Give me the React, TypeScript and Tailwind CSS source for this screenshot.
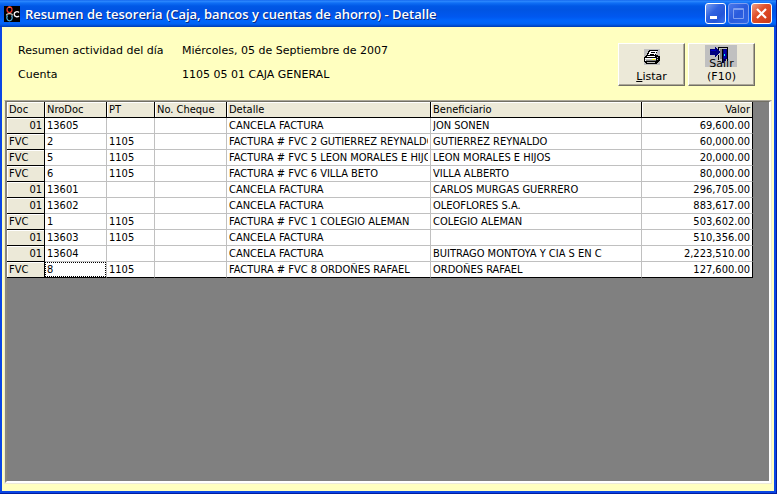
import type { ReactNode } from "react";

type Row = {
  doc: string;
  nro: string;
  pt: string;
  detalle: string;
  beneficiario: string;
  valor: string;
};

const ROWS: Row[] = [
  { doc: "01", nro: "13605", pt: "", detalle: "CANCELA FACTURA", beneficiario: "JON SONEN", valor: "69,600.00" },
  { doc: "FVC", nro: "2", pt: "1105", detalle: "FACTURA # FVC 2 GUTIERREZ REYNALDO", beneficiario: "GUTIERREZ REYNALDO", valor: "60,000.00" },
  { doc: "FVC", nro: "5", pt: "1105", detalle: "FACTURA # FVC 5 LEON MORALES E HIJOS", beneficiario: "LEON MORALES E HIJOS", valor: "20,000.00" },
  { doc: "FVC", nro: "6", pt: "1105", detalle: "FACTURA # FVC 6 VILLA BETO", beneficiario: "VILLA ALBERTO", valor: "80,000.00" },
  { doc: "01", nro: "13601", pt: "", detalle: "CANCELA FACTURA", beneficiario: "CARLOS MURGAS GUERRERO", valor: "296,705.00" },
  { doc: "01", nro: "13602", pt: "", detalle: "CANCELA FACTURA", beneficiario: "OLEOFLORES S.A.", valor: "883,617.00" },
  { doc: "FVC", nro: "1", pt: "1105", detalle: "FACTURA # FVC 1 COLEGIO ALEMAN", beneficiario: "COLEGIO ALEMAN", valor: "503,602.00" },
  { doc: "01", nro: "13603", pt: "1105", detalle: "CANCELA FACTURA", beneficiario: "", valor: "510,356.00" },
  { doc: "01", nro: "13604", pt: "", detalle: "CANCELA FACTURA", beneficiario: "BUITRAGO MONTOYA Y CIA S EN C", valor: "2,223,510.00" },
  { doc: "FVC", nro: "8", pt: "1105", detalle: "FACTURA # FVC 8 ORDOÑES RAFAEL", beneficiario: "ORDOÑES RAFAEL", valor: "127,600.00" },
];

const HEADERS = ["Doc", "NroDoc", "PT", "No. Cheque", "Detalle", "Beneficiario", "Valor"];

function AppLogo() {
  return (
    <svg width="16" height="16" viewBox="0 0 16 16" aria-hidden="true">
      <rect width="16" height="16" fill="#000" />
      <g fill="none">
        <ellipse cx="5.500" cy="3.800" rx="2.500" ry="2.800" stroke="#e8342a" strokeWidth="1.300" />
        <path d="M4.500 1.200h2" stroke="#ffb04a" />
        <path d="M15 6.500c-1.500-1.600-4.800-.8-4.800 1.700s3.300 3.300 4.800 1.700" stroke="#f4f4f4" strokeWidth="1.400" />
        <path d="M2.500 9.500c0-2.600 6-2.600 6 0" stroke="#d8d0c0" strokeWidth="1.200" />
        <path d="M3.500 9.500c-1.500 2-.5 5.300 2 5.300s3.500-3.300 2-5.300" stroke="#4aa9d8" strokeWidth="1.300" />
      </g>
    </svg>
  );
}

function PrinterIcon() {
  return (
    <svg width="16" height="16" viewBox="0 0 16 16" shapeRendering="crispEdges" aria-hidden="true">
      <rect width="16" height="16" fill="#c0c0c0" />
      <path d="M5 1h9v1h-1v2h-1v2h2v1h2v5h-1v1h-1v1h-1v1H2v-1H1v-1H0V8h1V7h1V6h1V4h1V2h1z" fill="#000" />
      <path d="M6 2h7v1h-1v2h-1v1H4V5h1V3h1z" fill="#fff" />
      <path d="M7 3h4v1H7zM6 5h4v1H6z" fill="#000" />
      <path d="M3 7h8v1H3z" fill="#fff" />
      <path d="M1 9h11v3H1z" fill="#fff" />
      <path d="M1 10h11v1H1zM3 13h8v1H3zM13 8h1v1h-1zM13 10h1v1h-1z" fill="#c0c0c0" />
      <path d="M2 11h10v1H2z" fill="#808080" />
      <path d="M8 10h3v1H8z" fill="#ff0" />
    </svg>
  );
}

function ExitIcon() {
  return (
    <svg width="32" height="22" viewBox="0 0 32 22" shapeRendering="crispEdges" aria-hidden="true">
      <rect width="32" height="22" fill="#c0c0c0" />
      <path d="M13 2h10v1H13zM13 2h1v4h-1zM22 2h1v14h-1zM13 10h1v5h-1z" fill="#000" />
      <path d="M15 4h2v10h-2z" fill="#808080" />
      <path d="M17 4h5v10h-1v2h-2v2h-2z" fill="#000080" />
      <path d="M17 4h1v14h-1z" fill="#000" />
      <path d="M19 5h2v8h-1v2h-1z" fill="#0000b0" />
      <path d="M19 9h1v2h-1z" fill="#00ffff" />
      <path d="M5 4h5V2h1v1h1v1h1v1h1v1h1v2h-1v1h-1v1h-1v1h-1v1h-1v-2H5z" fill="#000080" />
      <path d="M6 5h5v1H6z" fill="#0000c8" />
    </svg>
  );
}

function ToolButton({ children }: { children: ReactNode }) {
  return (
    <button className="relative flex h-[43px] w-[67px] flex-col items-center border border-t-white border-r-[#716f64] border-b-[#716f64] border-l-white bg-[#ece9d8] text-[11px] leading-[13px] text-black shadow-[inset_-1px_-1px_0_#aca899]">
      {children}
    </button>
  );
}

function CaptionButton({ label, className, children }: { label: string; className: string; children: ReactNode }) {
  return (
    <button
      aria-label={label}
      className={`flex size-[21px] items-center justify-center rounded-[3px] border ${className}`}
    >
      <svg width="19" height="19" viewBox="0 0 19 19" fill="none" aria-hidden="true">
        {children}
      </svg>
    </button>
  );
}

function TitleBar() {
  return (
    <header className="flex h-[27px] items-center bg-[linear-gradient(#0a5be8_0,#2f8bff_1px,#0f6ff5_3px,#0058e6_6px,#0054e3_10px,#0058f0_17px,#0066fc_21px,#0062f4_24px,#0048c8_26px,#003cb0_27px)] pr-1 pl-1">
      <AppLogo />
      <h1 className="ml-[5px] flex-1 truncate pt-px font-['Open_Sans'] text-[13px] leading-5 font-semibold text-white [text-shadow:1px_1px_0_#0a2a80]">
        Resumen de tesoreria (Caja, bancos y cuentas de ahorro) - Detalle
      </h1>
      <div className="flex gap-[2px]">
        <CaptionButton label="Minimizar" className="border-white bg-[linear-gradient(135deg,#7ba0f0,#2f62e0_40%,#2456d8_70%,#3a74f0)]">
          <path d="M4 13.500h7" stroke="#fff" strokeWidth="3" />
        </CaptionButton>
        <CaptionButton label="Maximizar" className="border-[#7f9ff0] bg-[linear-gradient(135deg,#4a78ea,#2a5bdd_50%,#2f66e6)]">
          <path d="M4.500 4.500h10v10h-10zM4 5.500h11" stroke="#7f9ff0" />
        </CaptionButton>
        <CaptionButton label="Cerrar" className="border-white bg-[linear-gradient(135deg,#f0a088,#e0502c_40%,#d84420_70%,#c83a18)]">
          <path d="M5 5l9 9M14 5l-9 9" stroke="#fff" strokeWidth="2.200" />
        </CaptionButton>
      </div>
    </header>
  );
}

function Cell({ children, className = "", focused = false }: { children?: ReactNode; className?: string; focused?: boolean }) {
  return (
    <td className={`h-4 border-r border-b border-[#c0c0c0] p-0 last:border-r-black group-last:border-b-black ${className}`}>
      <div
        className={`h-[15px] overflow-hidden px-[2px] ${focused ? "outline-1 -outline-offset-1 outline-dotted outline-black" : ""}`}
      >
        <div className="overflow-hidden leading-[16px] whitespace-nowrap">{children}</div>
      </div>
    </td>
  );
}

function DetailTable() {
  return (
    <table className="w-[746px] table-fixed border-separate border-spacing-0 bg-white font-['DejaVu_Sans_Condensed','DejaVu_Sans',sans-serif] text-[11px] text-black">
      <colgroup>
        <col className="w-[38px]" />
        <col className="w-[62px]" />
        <col className="w-[48px]" />
        <col className="w-[72px]" />
        <col className="w-[204px]" />
        <col className="w-[211px]" />
        <col className="w-[111px]" />
      </colgroup>
      <thead>
        <tr>
          {HEADERS.map((h) => (
            <th
              key={h}
              scope="col"
              className="h-4 border-r border-b border-black bg-[#ece9d8] px-[2px] py-0 text-left leading-[15px] font-normal whitespace-nowrap shadow-[inset_1px_1px_0_#fff] last:text-right"
            >
              {h}
            </th>
          ))}
        </tr>
      </thead>
      <tbody>
        {ROWS.map((r) => (
          <tr key={r.nro} className="group">
            <th
              scope="row"
              className={`h-4 border-r border-b border-black bg-[#ece9d8] px-[2px] py-0 leading-[15px] font-normal shadow-[inset_1px_1px_0_#fff] ${r.doc === "01" ? "text-right" : "text-left"}`}
            >
              {r.doc}
            </th>
            <Cell focused={r.nro === "8"}>{r.nro}</Cell>
            <Cell>{r.pt}</Cell>
            <Cell />
            <Cell>{r.detalle}</Cell>
            <Cell>{r.beneficiario}</Cell>
            <Cell className="text-right">{r.valor}</Cell>
          </tr>
        ))}
      </tbody>
    </table>
  );
}

export default function App() {
  return (
    <div className="flex min-h-screen flex-col border-r border-b border-[#001da0] bg-[#0a46e4] font-['DejaVu_Sans',Verdana,sans-serif] text-black">
      <TitleBar />
      <main className="mr-[2px] mb-[2px] ml-[2px] flex flex-1 flex-col bg-[#ffffc0] pr-[2px] pb-[7px] pl-[2px]">
        <div className="flex h-[73px] items-start justify-between pr-[17px] pl-[14px]">
          <dl className="grid grid-cols-[164px_1fr] pt-3 text-[11px] leading-6">
            <dt>Resumen actividad del día</dt>
            <dd>Miércoles, 05 de Septiembre de 2007</dd>
            <dt>Cuenta</dt>
            <dd>1105 05 01 CAJA GENERAL</dd>
          </dl>
          <div className="flex gap-[3px] pt-4">
            <ToolButton>
              <span className="pt-[5px]">
                <PrinterIcon />
              </span>
              <span className="pt-[5px]">
                <u>L</u>istar
              </span>
            </ToolButton>
            <ToolButton>
              <span className="absolute top-px left-4">
                <ExitIcon />
              </span>
              <span className="relative pt-[13px]">Salir</span>
              <span className="relative">(F10)</span>
            </ToolButton>
          </div>
        </div>
        <div className="flex flex-1 flex-col border border-t-[#aca899] border-r-[#ece9d8] border-b-[#ece9d8] border-l-[#ece9d8]">
          <div className="flex-1 overflow-hidden border-t border-r-2 border-b-2 border-l-2 border-t-[#716f64] border-r-white border-b-white border-l-[#8a877a] bg-[#808080]">
            <DetailTable />
          </div>
        </div>
      </main>
    </div>
  );
}
